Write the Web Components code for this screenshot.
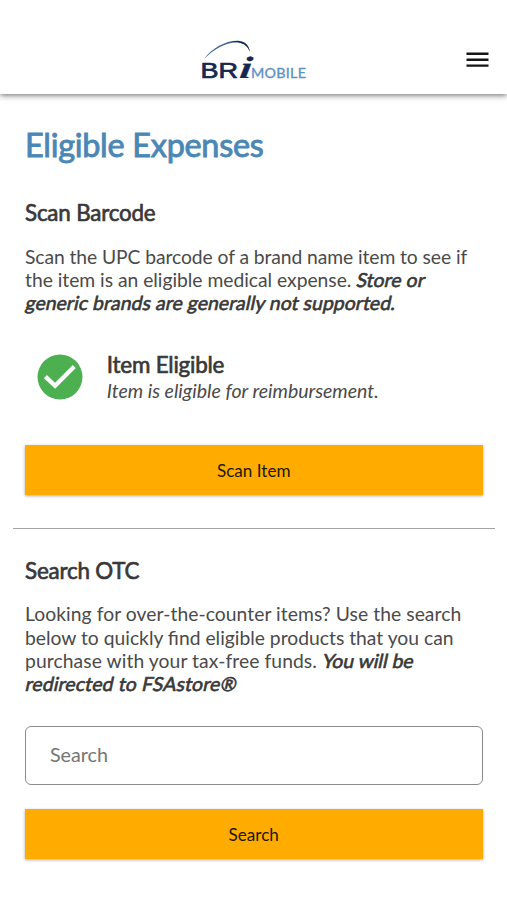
<!DOCTYPE html>
<html lang="en"><head><meta charset="utf-8"><title>Eligible Expenses</title>
<style>html,body{margin:0;background:#fff}body{font-family:Lato,sans-serif;color:#424242}</style></head>
<body><expense-page></expense-page>
<script>
const define=(name,html)=>customElements.define(name,class extends HTMLElement{
  constructor(){super();this.attachShadow({mode:'open'}).innerHTML=html}
});
define('brand-logo',`<style>
:host{display:block;width:106px;height:42px}svg{display:block;overflow:visible}
.b{font:400 21.4px "Liberation Sans",Arial,sans-serif;fill:#17284f;stroke:#17284f;stroke-width:.7}
.i{font:italic 700 31px "Liberation Serif",serif;fill:#17284f;stroke:#17284f;stroke-width:.2}
.m{font:400 14.3px Lato,sans-serif;fill:#5c91c4;stroke:#5c91c4;stroke-width:.35}
</style><svg width="106" height="42" viewBox="0 0 106 42">
<path d="M2 19C11 7 27-1 39 1.2C44 2.3 46.5 6 47.8 11.8C45.5 6.5 43 3.6 38 2.8C26 1 12 9 2 19Z" fill="#3f6493"/>
<path d="M30 1.2C41-.2 47 3.5 48 11.8C45.5 5.3 41 2.4 30 1.2Z" fill="#17284f"/>
<text class="b" x="-1.5" y="38" textLength="37.5" lengthAdjust="spacingAndGlyphs">BR</text>
<text class="i" x="36.5" y="38" textLength="12" lengthAdjust="spacingAndGlyphs" transform="translate(9.1 0) skewX(-8) translate(-3.5 0)">i</text>
<text class="m" x="49" y="38" textLength="55">MOBILE</text></svg>`);
define('menu-button',`<style>:host{display:block}button{display:block;padding:0;border:0;background:none}svg{display:block}</style>
<button aria-label="Menu"><svg width="23" height="16" viewBox="0 0 23 16"><path d="M.5 1.8H22.5M.5 7.7H22.5M.5 13.6H22.5" stroke="#151515" stroke-width="2.4"/></svg></button>`);
define('app-header',`<style>:host{box-sizing:border-box;display:grid;grid-template-columns:1fr 106px 1fr;height:94px;padding:40px 18px 0;box-shadow:0 1px 5px #0007,0 3px 7px #0002;background:#fff}
menu-button{justify-self:end;padding-top:12px}brand-logo{margin-left:1px}</style><span></span><brand-logo></brand-logo><menu-button></menu-button>`);
define('section-title',`<style>:host{display:block;font-size:22.4px;line-height:26px;letter-spacing:-.2px;color:#383838;-webkit-text-stroke:.65px currentColor}</style><slot></slot>`);
define('body-copy',`<style>:host{display:block;font-size:19.3px;line-height:23.3px;white-space:nowrap;color:#4a4a4a}</style><slot></slot>`);
define('strong-note',`<style>:host{display:inline-block;transform:translateX(1px) skewX(-12deg);color:#383838;-webkit-text-stroke:.65px currentColor}</style><slot></slot>`);
define('action-button',`<style>:host{display:block}button{display:block;width:100%;height:50px;padding:2px 0 0;border:0;background:#ffab00;color:#211800;font:17.1px Lato,sans-serif;box-shadow:0 1px 3px #0005}</style><button><slot></slot></button>`);
define('search-field',`<style>:host{display:block}input{box-sizing:border-box;display:block;width:100%;height:59px;padding:0 24px 2px;border:1.5px solid #8b8b8b;border-radius:6px;background:#fff;font:19.7px Lato,sans-serif;color:#333}input::placeholder{color:#757575;opacity:1}</style><input placeholder="Search" aria-label="Search">`);
define('result-status',`<style>:host{display:flex;align-items:center;gap:24.3px;padding-left:11.5px}svg{display:block;flex:none}.copy{display:block}.detail{font:italic 19.55px/25px Lato,sans-serif;color:#4a4a4a}</style>
<svg width="46" height="46" viewBox="0 0 46 46"><circle cx="23" cy="23" r="22.5" fill="#4caf50"/><path d="M8.4 22.6L18.1 31.8L37.3 12.6" fill="none" stroke="#fff" stroke-width="4.3"/></svg>
<div class="copy"><section-title><slot name="title"></slot></section-title><div class="detail"><slot></slot></div></div>`);
define('expense-page',`<style>:host{display:block;height:900px;overflow:hidden}
main{padding:31px 24.5px 0 25px}h1{margin:0;font-weight:400;font-size:32.4px;line-height:40px;letter-spacing:-.27px;color:#4b87b5;-webkit-text-stroke:.9px currentColor}
.scan{margin-top:35px}.copy{margin-top:18.5px}result-status{margin-top:37.5px}.scan-action{margin-top:42px}
hr{margin:33px -12.5px 0;border:0;border-top:1px solid #a4a4a4}.otc{margin-top:29px}search-field{margin-top:30.2px}.search-action{margin-top:24px}
.tight{letter-spacing:-.075px}.l1{letter-spacing:.06px}.l2{letter-spacing:.08px}.n1{letter-spacing:.1px}.n2{letter-spacing:.11px}.n3{letter-spacing:.2px}</style>
<app-header></app-header><main><h1>Eligible Expenses</h1>
<section-title class="scan">Scan Barcode</section-title>
<body-copy class="copy"><span class="tight">Scan the UPC barcode of a brand name item to see if</span><br><span style="letter-spacing:-.02px">the item is an eligible medical expense. </span><strong-note class="n1">Store or</strong-note><br><strong-note class="n2">generic brands are generally not supported.</strong-note></body-copy>
<result-status><span slot="title">Item Eligible</span>Item is eligible for reimbursement.</result-status>
<action-button class="scan-action">Scan Item</action-button><hr>
<section-title class="otc">Search OTC</section-title>
<body-copy class="copy"><span class="l1">Looking for over-the-counter items? Use the search</span><br>below to quickly find eligible products that you can<br><span class="l2">purchase with your tax-free funds. </span><strong-note>You will be</strong-note><br><strong-note class="n3">redirected to FSAstore®</strong-note></body-copy>
<search-field></search-field><action-button class="search-action">Search</action-button></main>`);
</script></body></html>
